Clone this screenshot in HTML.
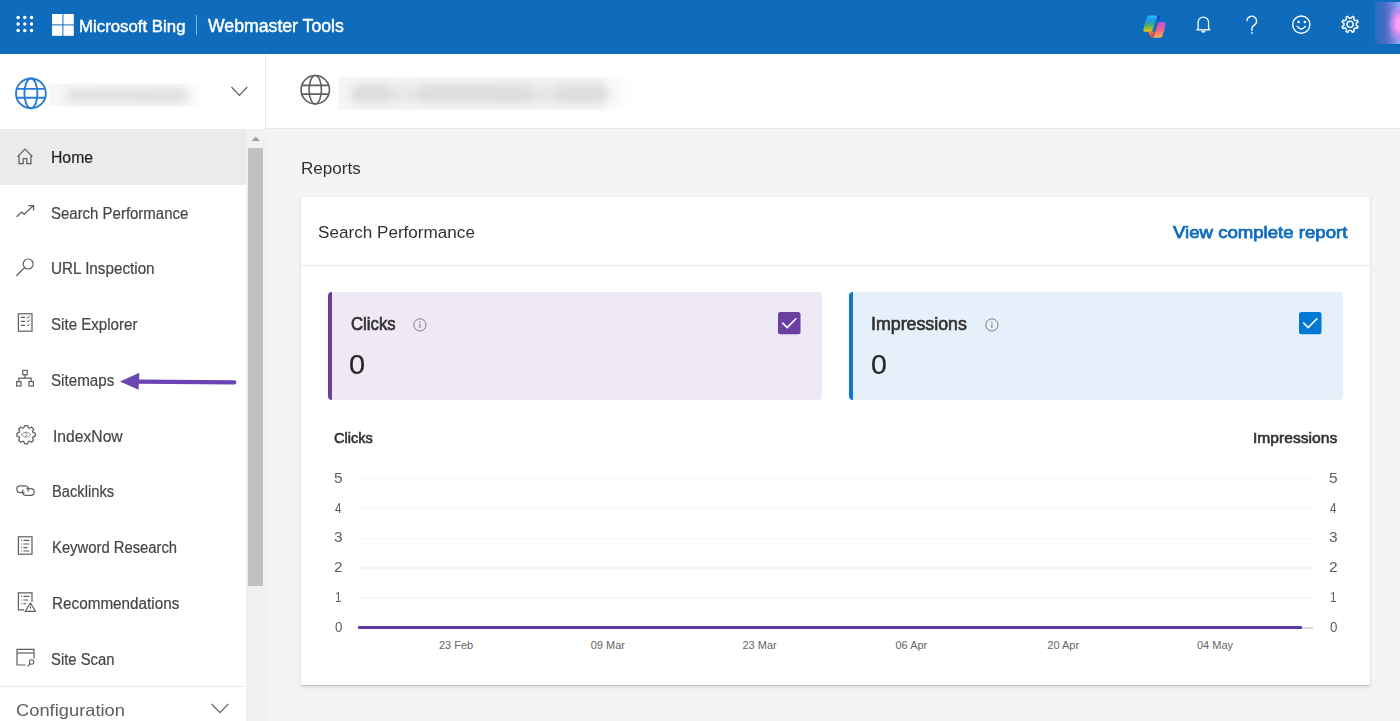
<!DOCTYPE html>
<html><head><meta charset="utf-8">
<style>
*{box-sizing:border-box;margin:0;padding:0}
html,body{width:1400px;height:721px;overflow:hidden;background:#f4f4f4;font-family:"Liberation Sans",sans-serif;position:relative}
.a{position:absolute;white-space:nowrap;line-height:1;transform-origin:0 0}
svg{position:absolute;overflow:visible}
.yl{position:absolute;font-size:13.5px;color:#555;line-height:1}
.xl{position:absolute;font-size:11px;color:#666;line-height:1;white-space:nowrap}
.grid{position:absolute;left:358px;width:955px;height:1.5px;background:#f7f7f7}
</style></head><body>

<div style="position:absolute;left:0;top:0;width:1400px;height:54px;background:#0f6cbd"></div>
<svg width="40" height="54" style="left:0;top:0"><g fill="#fff">
 <circle cx="18.1" cy="17.4" r="1.75"/><circle cx="24.8" cy="17.4" r="1.75"/><circle cx="31.5" cy="17.4" r="1.75"/>
 <circle cx="18.1" cy="24" r="1.75"/><circle cx="24.8" cy="24" r="1.75"/><circle cx="31.5" cy="24" r="1.75"/>
 <circle cx="18.1" cy="30.6" r="1.75"/><circle cx="24.8" cy="30.6" r="1.75"/><circle cx="31.5" cy="30.6" r="1.75"/>
</g></svg>
<svg width="80" height="54" style="left:0;top:0"><g fill="#fff"><rect x="52" y="14" width="10.4" height="10.4"/><rect x="63.4" y="14" width="10.4" height="10.4"/><rect x="52" y="25.4" width="10.4" height="10.4"/><rect x="63.4" y="25.4" width="10.4" height="10.4"/></g></svg>
<div style="position:absolute;left:196px;top:15.4px;width:1px;height:20px;background:rgba(255,255,255,.5)"></div>
<svg width="34" height="32" style="left:1138px;top:10px" viewBox="0 0 34 32">
 <defs>
  <linearGradient id="cg1" x1="0" y1="0" x2="0" y2="1"><stop offset="0" stop-color="#2cbdfb"/><stop offset=".28" stop-color="#109ae9"/><stop offset=".62" stop-color="#4fb06a"/><stop offset="1" stop-color="#fbc700"/></linearGradient>
  <linearGradient id="cg2" x1="0" y1="0" x2="0" y2="1"><stop offset="0" stop-color="#b45ae9"/><stop offset=".45" stop-color="#f25a8c"/><stop offset="1" stop-color="#ffaa52"/></linearGradient>
  <linearGradient id="cg3" x1="0" y1="0" x2="1" y2="1"><stop offset="0" stop-color="#ff8a3a"/><stop offset="1" stop-color="#d8362c"/></linearGradient>
  <linearGradient id="cg4" x1="0" y1="0" x2="0" y2="1"><stop offset="0" stop-color="#1b2fc8"/><stop offset="1" stop-color="#1f5fd0" stop-opacity="0"/></linearGradient>
 </defs>
 <path d="M17 5.6 Q20.2 5.4 21.6 6.6 Q22.4 7.6 21.6 9.6 L19.2 15 L17.8 15 Z" fill="url(#cg4)"/>
 <path d="M11.6 5.6 L18.6 5.6 Q19.6 5.7 19.2 7 L14.4 20.6 Q14 21.8 12.8 21.8 L7.2 21.8 Q5.2 21.8 5.4 19.8 Q6.2 13 9 7.4 Q9.8 5.6 11.6 5.6Z" fill="url(#cg1)"/>
 <path d="M10.4 21.4 L16.6 21.4 L15 27.8 Q13 27.9 12 26 Z" fill="url(#cg3)"/>
 <path d="M21.8 12 L25.6 12 Q27.8 12 27.5 14.2 Q26.8 20.5 24.4 26 Q23.6 27.8 21.8 27.8 L14.6 27.8 Q15.6 27.4 16.2 25.6 L19.8 13.6 Q20.3 12 21.8 12Z" fill="url(#cg2)"/>
</svg>
<svg width="20" height="22" style="left:1193px;top:14px" viewBox="0 0 20 22">
 <path d="M5.1 15.8 V8.3 A5.25 5.25 0 0 1 15.6 8.3 V15.8" fill="none" stroke="#fff" stroke-width="1.3"/>
 <path d="M3.4 15.8 H17.4" stroke="#fff" stroke-width="1.3"/>
 <path d="M8.8 16.4 A1.6 1.6 0 0 0 12 16.4" fill="none" stroke="#fff" stroke-width="1.3"/>
</svg>
<svg width="20" height="24" style="left:1242px;top:12px" viewBox="0 0 20 24">
 <path d="M5.0 8.6 A4.8 4.8 0 1 1 13.2 12.3 Q9.9 14.3 9.9 16.6 V18.4" fill="none" stroke="#fff" stroke-width="1.35" stroke-linecap="round"/>
 <circle cx="9.9" cy="20.9" r="0.9" fill="#fff"/>
</svg>
<svg width="24" height="24" style="left:1289px;top:13px" viewBox="0 0 24 24">
 <circle cx="12.3" cy="11.6" r="8.6" fill="none" stroke="#fff" stroke-width="1.4"/>
 <circle cx="9.6" cy="9.1" r="1.25" fill="#fff"/><circle cx="15.9" cy="9.1" r="1.25" fill="#fff"/>
 <path d="M8.2 13.4 Q12.3 18.6 16.4 13.4" fill="none" stroke="#fff" stroke-width="1.4" stroke-linecap="round"/>
</svg>
<svg width="24" height="24" style="left:1338px;top:12px" viewBox="0 0 24 24">
 <path fill="none" stroke="#fff" stroke-width="1.4" stroke-linejoin="round" d="M13.07 6.18 L14.42 4.33 L16.10 5.03 L15.74 7.28 L17.12 8.66 L19.37 8.30 L20.07 9.98 L18.22 11.33 L18.22 13.27 L20.07 14.62 L19.37 16.30 L17.12 15.94 L15.74 17.32 L16.10 19.57 L14.42 20.27 L13.07 18.42 L11.13 18.42 L9.78 20.27 L8.10 19.57 L8.46 17.32 L7.08 15.94 L4.83 16.30 L4.13 14.62 L5.98 13.27 L5.98 11.33 L4.13 9.98 L4.83 8.30 L7.08 8.66 L8.46 7.28 L8.10 5.03 L9.78 4.33 L11.13 6.18 Z"/>
 <circle cx="12.1" cy="12.3" r="3.1" fill="none" stroke="#fff" stroke-width="1.4"/>
</svg>
<div style="position:absolute;left:1375px;top:2px;width:25px;height:41.5px;background:radial-gradient(ellipse 12px 20px at 100% 52%,#ffa4f8 0%,#ff9ff4 30%,#c58ae8 60%,rgba(150,120,230,0) 100%),linear-gradient(90deg,#2a6cc2 0%,#4a6cc6 40%,#7a86e2 75%,#88b4ff 100%)"></div>


<div style="position:absolute;left:0;top:54px;width:266px;height:667px;background:#fff"></div>
<div style="position:absolute;left:0;top:128.6px;width:246px;height:56.4px;background:#edebe9"></div>
<div style="position:absolute;left:265px;top:54px;width:1px;height:75px;background:#e9e8e6"></div>
<div style="position:absolute;left:246px;top:129px;width:20px;height:592px;background:#f1f1f1"></div>
<div style="position:absolute;left:248px;top:148px;width:15.4px;height:437.7px;background:#c1c1c1"></div>
<svg width="20" height="20" style="left:246px;top:130px" viewBox="0 0 20 20"><path d="M5.6 11 L9.8 6.4 L14 11Z" fill="#a3a3a3"/></svg>
<div style="position:absolute;left:0;top:686px;width:246px;height:1px;background:#edebe9"></div>
<svg width="40" height="40" style="left:11px;top:74px" viewBox="0 0 40 40"><g fill="none" stroke="#2b7cd3" stroke-width="1.9"><circle cx="19.9" cy="19.4" r="14.9"/><ellipse cx="19.9" cy="19.4" rx="6.5" ry="14.9"/><path d="M5.6 14.9 H34.2 M5.6 23.8 H34.2"/></g></svg>
<div style="position:absolute;left:49px;top:84.4px;width:156.4px;height:21.8px;background:linear-gradient(90deg,#f7f7f7 0%,#f5f5f5 85%,rgba(250,250,250,0) 100%);filter:blur(0.7px)"></div>
<div style="position:absolute;left:66px;top:88.6px;width:122px;height:13px;background:#e0e0e0;border-radius:6px;filter:blur(4px)"></div>
<svg width="20" height="12" style="left:230px;top:85px" viewBox="0 0 20 12"><path d="M1.5 2 L9.4 10.4 L17.2 2" fill="none" stroke="#605e5c" stroke-width="1.2"/></svg>

<svg width="20" height="20" style="left:15px;top:146px" viewBox="0 0 20 20"><path d="M2.6 10.6 L10 3.2 L17.4 10.6 M4 9.4 V17.6 H8.2 V12.6 H11.8 V17.6 H16 V9.4" fill="none" stroke="#605e5c" stroke-width="1.2"/></svg>
<svg width="20" height="14" style="left:15px;top:204px" viewBox="0 0 20 14"><path d="M1.6 12.8 L6.6 8 L9.2 10.2 L18.4 1.6 M13.2 1.6 H18.6 V6.6" fill="none" stroke="#605e5c" stroke-width="1.3"/></svg>
<svg width="20" height="20" style="left:15px;top:257px" viewBox="0 0 20 20"><circle cx="13.2" cy="7" r="5" fill="none" stroke="#605e5c" stroke-width="1.2"/><path d="M9.6 10.6 L1.4 18.8" stroke="#605e5c" stroke-width="1.3"/></svg>
<svg width="20" height="20" style="left:15px;top:312px" viewBox="0 0 20 20"><rect x="3.4" y="1.8" width="13.6" height="17.4" fill="none" stroke="#605e5c" stroke-width="1.2"/><path d="M5.8 5.4 H10 M5.8 9.4 H10 M5.8 13.4 H10" stroke="#605e5c" stroke-width="1.1"/><path d="M11.6 5 L12.8 6 L14.8 3.8 M11.6 9 L12.8 10 L14.8 7.8 M11.6 13 L12.8 14 L14.8 11.8" fill="none" stroke="#605e5c" stroke-width="1"/></svg>
<svg width="20" height="20" style="left:15px;top:369px" viewBox="0 0 20 20"><rect x="7.8" y="1.4" width="4.4" height="4.4" fill="none" stroke="#605e5c" stroke-width="1.2"/><rect x="1.6" y="12.6" width="4.4" height="4.4" fill="none" stroke="#605e5c" stroke-width="1.2"/><rect x="14" y="12.6" width="4.4" height="4.4" fill="none" stroke="#605e5c" stroke-width="1.2"/><path d="M10 5.8 V9.2 M3.8 12.6 V9.2 H16.2 V12.6" fill="none" stroke="#605e5c" stroke-width="1.2"/></svg>
<svg width="22" height="22" style="left:15px;top:424px" viewBox="0 0 22 22"><path d="M8.84 3.76 L9.65 1.51 L12.55 1.51 L13.36 3.76 L14.41 4.20 L16.57 3.18 L18.62 5.23 L17.60 7.39 L18.04 8.44 L20.29 9.25 L20.29 12.15 L18.04 12.96 L17.60 14.01 L18.62 16.17 L16.57 18.22 L14.41 17.20 L13.36 17.64 L12.55 19.89 L9.65 19.89 L8.84 17.64 L7.79 17.20 L5.63 18.22 L3.58 16.17 L4.60 14.01 L4.16 12.96 L1.91 12.15 L1.91 9.25 L4.16 8.44 L4.60 7.39 L3.58 5.23 L5.63 3.18 L7.79 4.20 Z" fill="none" stroke="#605e5c" stroke-width="1.25" stroke-linejoin="round"/><path d="M6.4 10.7 Q11.1 5.4 15.8 10.7 Q11.1 16 6.4 10.7Z" fill="none" stroke="#8a8886" stroke-width="0.9"/><path d="M10.2 8.6 L12.4 10.7 L10.2 12.8" fill="none" stroke="#8a8886" stroke-width="1"/></svg>
<svg width="22" height="16" style="left:15px;top:483px" viewBox="0 0 22 16"><path d="M9.6 9.6 H5.2 A3.4 3.4 0 0 1 5.2 2.8 H10.4 A3.4 3.4 0 0 1 12.6 8.6" fill="none" stroke="#605e5c" stroke-width="1.2"/><path d="M11.4 5.6 H15.8 A3.4 3.4 0 0 1 15.8 12.4 H10.6 A3.4 3.4 0 0 1 8.4 6.6" fill="none" stroke="#605e5c" stroke-width="1.2"/></svg>
<svg width="20" height="20" style="left:15px;top:535px" viewBox="0 0 20 20"><rect x="3.4" y="1.8" width="13.6" height="17.4" fill="none" stroke="#605e5c" stroke-width="1.2"/><path d="M6 5.4 H6.8 M6 9 H6.8 M6 12.6 H6.8 M6 16 H6.8" stroke="#605e5c" stroke-width="1.1"/><path d="M8.4 5.4 H14.4 M8.4 9 H14.4 M8.4 12.6 H12.6 M8.4 16 H14.4" stroke="#605e5c" stroke-width="1.1"/></svg>
<svg width="22" height="22" style="left:15px;top:591px" viewBox="0 0 22 22"><path d="M9 18.8 H3.4 V1.8 H17 V11" fill="none" stroke="#605e5c" stroke-width="1.2"/><path d="M6 5.4 H6.8 M6 9 H6.8 M6 12.6 H6.8 M8.4 5.4 H14.4 M8.4 9 H13 M8.4 12.6 H10.6" stroke="#605e5c" stroke-width="1.1"/><path d="M15.4 12 L20.6 20.4 H10.2Z" fill="none" stroke="#605e5c" stroke-width="1.1" stroke-linejoin="round"/><path d="M15.4 15 V17.6 M15.4 18.6 V19.2" stroke="#605e5c" stroke-width="1"/></svg>
<svg width="22" height="20" style="left:15px;top:647px" viewBox="0 0 22 20"><path d="M10.6 18 H2 V2.4 H19 V11.4" fill="none" stroke="#605e5c" stroke-width="1.2"/><path d="M2 6 H19" stroke="#605e5c" stroke-width="1.2"/><circle cx="16.6" cy="15" r="2.2" fill="none" stroke="#605e5c" stroke-width="1.1"/><path d="M15 16.8 L12.6 19.4" stroke="#605e5c" stroke-width="1.2"/></svg>

<svg width="130" height="24" style="left:115px;top:370px" viewBox="0 0 130 24"><path d="M5 11.4 L24.4 2.8 L23.6 19.7Z" fill="#6c44b4"/><path d="M23 11.6 L119.3 12.4" stroke="#6c44b4" stroke-width="4.2" stroke-linecap="round"/></svg>
<svg width="22" height="14" style="left:210px;top:701px" viewBox="0 0 22 14"><path d="M1.4 2.8 L9.9 11.6 L18.4 2.8" fill="none" stroke="#605e5c" stroke-width="1.2"/></svg>


<div style="position:absolute;left:266px;top:54px;width:1134px;height:75px;background:#fff;border-bottom:1px solid #e9e8e6"></div>
<svg width="40" height="40" style="left:295px;top:70px" viewBox="0 0 40 40"><g fill="none" stroke="#605e5c" stroke-width="1.6"><circle cx="20.25" cy="19.75" r="14.2"/><ellipse cx="20.25" cy="19.75" rx="6.2" ry="14.2"/><path d="M6.5 15.4 H34 M6.5 24.1 H34"/></g></svg>
<div style="position:absolute;left:337.6px;top:77.4px;width:292.4px;height:32.6px;background:linear-gradient(90deg,#f5f5f5 0%,#f3f3f3 88%,rgba(250,250,250,0) 100%);filter:blur(0.8px)"></div>
<div style="position:absolute;left:352px;top:85.5px;width:256px;height:16px;background:#e6e6e6;border-radius:8px;filter:blur(4.5px)"></div>
<div style="position:absolute;left:352px;top:86px;width:40px;height:15px;background:#dcdcdc;border-radius:7px;filter:blur(4.5px)"></div>
<div style="position:absolute;left:418px;top:86px;width:115px;height:15px;background:#dcdcdc;border-radius:7px;filter:blur(4.5px)"></div>
<div style="position:absolute;left:556px;top:86px;width:50px;height:15px;background:#dcdcdc;border-radius:7px;filter:blur(4.5px)"></div>
<div style="position:absolute;left:301px;top:197px;width:1069px;height:488px;background:#fff;border-radius:2px;box-shadow:0 1.6px 3.6px rgba(0,0,0,.12),0 .3px .9px rgba(0,0,0,.10)"></div>
<div style="position:absolute;left:301px;top:265px;width:1069px;height:1px;background:#edebe9"></div>
<div style="position:absolute;top:292px;height:107.5px;width:494px;border-radius:4px;left:328px;background:#efe9f5;border-left:4.6px solid #6b3fa0"></div>
<div style="position:absolute;top:292px;height:107.5px;width:494px;border-radius:4px;left:849px;background:#e5f0fa;border-left:4.6px solid #0f78d4"></div>
<svg width="16" height="16" style="left:412px;top:316.5px" viewBox="0 0 16 16"><circle cx="7.9" cy="7.9" r="6.1" fill="none" stroke="#7a7a7a" stroke-width="1"/><path d="M7.9 7 V11" stroke="#7a7a7a" stroke-width="1.1"/><circle cx="7.9" cy="5.2" r=".7" fill="#7a7a7a"/></svg>
<svg width="16" height="16" style="left:983.5px;top:316.5px" viewBox="0 0 16 16"><circle cx="7.9" cy="7.9" r="6.1" fill="none" stroke="#7a7a7a" stroke-width="1"/><path d="M7.9 7 V11" stroke="#7a7a7a" stroke-width="1.1"/><circle cx="7.9" cy="5.2" r=".7" fill="#7a7a7a"/></svg>
<svg width="23" height="23" style="left:777.6px;top:311.6px" viewBox="0 0 23 23"><rect x="0" y="0" width="22.5" height="22.3" rx="2.5" fill="#6b3fa0"/><path d="M4.2 10.6 L9.2 15.6 L18.4 6.2" fill="none" stroke="#fff" stroke-width="1.5"/></svg>
<svg width="23" height="23" style="left:1298.6px;top:311.6px" viewBox="0 0 23 23"><rect x="0" y="0" width="22.5" height="22.3" rx="2.5" fill="#0078d4"/><path d="M4.2 10.6 L9.2 15.6 L18.4 6.2" fill="none" stroke="#fff" stroke-width="1.5"/></svg>
<div class="grid" style="top:477.9px"></div>
<div class="grid" style="top:507.7px"></div>
<div class="grid" style="top:537.5px"></div>
<div class="grid" style="top:567.3px"></div>
<div class="grid" style="top:597.1px"></div>
<div class="grid" style="top:627.4px;background:#d9d9d9"></div>
<div style="position:absolute;left:358px;top:626.3px;width:944.3px;height:3px;background:#5e3aa8;border-radius:1px"></div>
<div class="xl" style="left:406.0px;width:100px;text-align:center;top:639.8px">23 Feb</div>
<div class="xl" style="left:557.8px;width:100px;text-align:center;top:639.8px">09 Mar</div>
<div class="xl" style="left:709.6px;width:100px;text-align:center;top:639.8px">23 Mar</div>
<div class="xl" style="left:861.4px;width:100px;text-align:center;top:639.8px">06 Apr</div>
<div class="xl" style="left:1013.2px;width:100px;text-align:center;top:639.8px">20 Apr</div>
<div class="xl" style="left:1165.0px;width:100px;text-align:center;top:639.8px">04 May</div>

<div class="a" style="left:78.61px;top:18.00px;font-size:17.01px;color:#fff;font-weight:400;-webkit-text-stroke:0.45px #fff;transform:scaleX(0.9887);">Microsoft Bing</div>
<div class="a" style="left:207.60px;top:18.00px;font-size:17.73px;color:#fff;font-weight:400;-webkit-text-stroke:0.45px #fff;transform:scaleX(0.9971);">Webmaster Tools</div>
<div class="a" style="left:51.40px;top:150.00px;font-size:15.84px;color:#252423;font-weight:400;-webkit-text-stroke:0.2px #252423;transform:scaleX(0.9951);">Home</div>
<div class="a" style="left:51.15px;top:205.73px;font-size:15.84px;color:#484644;font-weight:400;-webkit-text-stroke:0.2px #484644;transform:scaleX(0.9458);">Search Performance</div>
<div class="a" style="left:51.04px;top:261.46px;font-size:15.84px;color:#484644;font-weight:400;-webkit-text-stroke:0.2px #484644;transform:scaleX(0.9623);">URL Inspection</div>
<div class="a" style="left:51.05px;top:317.19px;font-size:15.84px;color:#484644;font-weight:400;-webkit-text-stroke:0.2px #484644;transform:scaleX(0.9544);">Site Explorer</div>
<div class="a" style="left:51.04px;top:372.92px;font-size:15.84px;color:#484644;font-weight:400;-webkit-text-stroke:0.2px #484644;transform:scaleX(0.9585);">Sitemaps</div>
<div class="a" style="left:53.31px;top:428.65px;font-size:15.84px;color:#484644;font-weight:400;-webkit-text-stroke:0.2px #484644;transform:scaleX(0.9900);">IndexNow</div>
<div class="a" style="left:51.97px;top:484.38px;font-size:15.84px;color:#484644;font-weight:400;-webkit-text-stroke:0.2px #484644;transform:scaleX(0.9303);">Backlinks</div>
<div class="a" style="left:51.96px;top:540.11px;font-size:15.84px;color:#484644;font-weight:400;-webkit-text-stroke:0.2px #484644;transform:scaleX(0.9356);">Keyword Research</div>
<div class="a" style="left:51.94px;top:595.84px;font-size:15.84px;color:#484644;font-weight:400;-webkit-text-stroke:0.2px #484644;transform:scaleX(0.9649);">Recommendations</div>
<div class="a" style="left:51.06px;top:651.57px;font-size:15.84px;color:#484644;font-weight:400;-webkit-text-stroke:0.2px #484644;transform:scaleX(0.9364);">Site Scan</div>
<div class="a" style="left:15.90px;top:702.80px;font-size:16.72px;color:#605e5c;font-weight:400;-webkit-text-stroke:0px #605e5c;transform:scaleX(1.0969);">Configuration</div>
<div class="a" style="left:301.26px;top:160.25px;font-size:17.3px;color:#323130;font-weight:400;-webkit-text-stroke:0px #323130;transform:scaleX(0.9873);">Reports</div>
<div class="a" style="left:318.28px;top:224.90px;font-size:16.86px;color:#323130;font-weight:400;-webkit-text-stroke:0px #323130;transform:scaleX(1.0150);">Search Performance</div>
<div class="a" style="left:1173.00px;top:224.90px;font-size:16.72px;color:#0f6cbd;font-weight:400;-webkit-text-stroke:0.75px #0f6cbd;transform:scaleX(1.1134);">View complete report</div>
<div class="a" style="left:350.60px;top:314.80px;font-size:18.31px;color:#323130;font-weight:400;-webkit-text-stroke:0.65px #323130;transform:scaleX(0.9143);">Clicks</div>
<div class="a" style="left:870.93px;top:315.00px;font-size:18.31px;color:#323130;font-weight:400;-webkit-text-stroke:0.65px #323130;transform:scaleX(0.9714);">Impressions</div>
<div class="a" style="left:349.23px;top:352.00px;font-size:27.03px;color:#252423;font-weight:400;-webkit-text-stroke:0.2px #252423;transform:scaleX(1.0692);">0</div>
<div class="a" style="left:870.85px;top:352.00px;font-size:27.03px;color:#252423;font-weight:400;-webkit-text-stroke:0.2px #252423;transform:scaleX(1.0538);">0</div>
<div class="a" style="left:333.80px;top:430.00px;font-size:15.55px;color:#323130;font-weight:400;-webkit-text-stroke:0.6px #323130;transform:scaleX(0.9333);">Clicks</div>
<div class="a" style="left:1252.89px;top:430.00px;font-size:15.55px;color:#323130;font-weight:400;-webkit-text-stroke:0.6px #323130;transform:scaleX(1.0060);">Impressions</div>
<div class="a" style="left:333.70px;top:470.80px;font-size:14.1px;color:#606060;font-weight:400;-webkit-text-stroke:0px #606060;transform:scaleX(1.1000);">5</div>
<div class="a" style="left:1328.90px;top:470.80px;font-size:14.1px;color:#606060;font-weight:400;-webkit-text-stroke:0px #606060;transform:scaleX(1.1000);">5</div>
<div class="a" style="left:334.80px;top:500.58px;font-size:14.1px;color:#606060;font-weight:400;-webkit-text-stroke:0px #606060;transform:scaleX(0.8250);">4</div>
<div class="a" style="left:1330.00px;top:500.58px;font-size:14.1px;color:#606060;font-weight:400;-webkit-text-stroke:0px #606060;transform:scaleX(0.8250);">4</div>
<div class="a" style="left:333.70px;top:530.36px;font-size:14.1px;color:#606060;font-weight:400;-webkit-text-stroke:0px #606060;transform:scaleX(1.1000);">3</div>
<div class="a" style="left:1328.90px;top:530.36px;font-size:14.1px;color:#606060;font-weight:400;-webkit-text-stroke:0px #606060;transform:scaleX(1.1000);">3</div>
<div class="a" style="left:333.70px;top:560.14px;font-size:14.1px;color:#606060;font-weight:400;-webkit-text-stroke:0px #606060;transform:scaleX(1.1000);">2</div>
<div class="a" style="left:1328.90px;top:560.14px;font-size:14.1px;color:#606060;font-weight:400;-webkit-text-stroke:0px #606060;transform:scaleX(1.1000);">2</div>
<div class="a" style="left:334.77px;top:589.92px;font-size:14.1px;color:#606060;font-weight:400;-webkit-text-stroke:0px #606060;transform:scaleX(0.8333);">1</div>
<div class="a" style="left:1329.77px;top:589.92px;font-size:14.1px;color:#606060;font-weight:400;-webkit-text-stroke:0px #606060;transform:scaleX(0.8333);">1</div>
<div class="a" style="left:334.80px;top:619.70px;font-size:14.1px;color:#606060;font-weight:400;-webkit-text-stroke:0px #606060;transform:scaleX(0.9429);">0</div>
<div class="a" style="left:1330.00px;top:619.70px;font-size:14.1px;color:#606060;font-weight:400;-webkit-text-stroke:0px #606060;transform:scaleX(0.9429);">0</div>

</body></html>
